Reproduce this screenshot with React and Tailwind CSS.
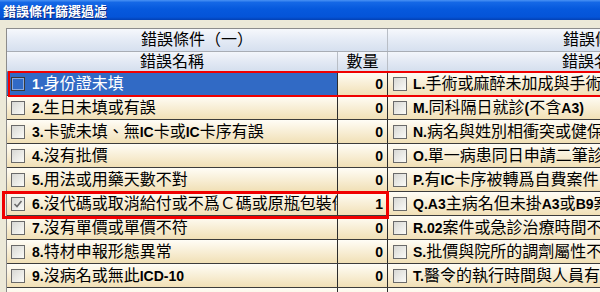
import React from 'react';

const leftRows = [
    { name: '1.身份證未填', count: 0, selected: true },
    { name: '2.生日未填或有誤', count: 0 },
    { name: '3.卡號未填、無IC卡或IC卡序有誤', count: 0 },
    { name: '4.沒有批價', count: 0 },
    { name: '5.用法或用藥天數不對', count: 0 },
    { name: '6.沒代碼或取消給付或不爲Ｃ碼或原瓶包裝件', count: 1, checked: true },
    { name: '7.沒有單價或單價不符', count: 0 },
    { name: '8.特材申報形態異常', count: 0 },
    { name: '9.沒病名或無此ICD-10', count: 0 },
    { name: '', count: null, empty: true },
];

const rightRows = [
    'L.手術或麻醉未加成與手術日期不符',
    'M.同科隔日就診(不含A3)',
    'N.病名與姓別相衝突或健保卡性別不符',
    'O.單一病患同日申請二筆診察費',
    'P.有IC卡序被轉爲自費案件',
    'Q.A3主病名但未掛A3或B9案件',
    'R.02案件或急診治療時間不符',
    'S.批價與院所的調劑屬性不符',
    'T.醫令的執行時間與人員有誤',
    '',
];

// ascii parts are drawn bold, like the old fallback font
const Label = ({ text }) =>
    text.split(/([\x21-\x7E]+)/).map((part, i) =>
        /[\x21-\x7E]/.test(part) ? (
            <b key={i} className="font-bold text-[14px]">{part}</b>
        ) : (
            <span key={i}>{part}</span>
        )
    );

const Check = ({ selected, checked }) => (
    <span
        className={`shrink-0 w-[14px] h-[14px] border flex items-center justify-center ${
            selected
                ? 'border-[#3a3a3a] bg-[#316ac5] shadow-[inset_0_0_0_1px_#8aa8dc]'
                : 'border-[#6a6a6a] bg-gradient-to-br from-[#d8d8d4] to-[#fbfbf8]'
        }`}
    >
        {checked && (
            <svg width="10" height="10" viewBox="0 0 10 10">
                <polyline points="1.5,5 4,7.5 8.5,2" fill="none" stroke="#6b6b6b" strokeWidth="1.6" />
            </svg>
        )}
    </span>
);

const cream = 'bg-gradient-to-b from-[#fffdf6] to-[#f1e0b6]';

export default function App() {
    return (
        <div className="w-[600px] h-[292px] overflow-hidden relative bg-[#ece9d8] flex flex-col font-['Liberation_Sans','Noto_Sans_CJK_TC',sans-serif] text-black">
            <div className="h-[20px] shrink-0 flex items-center pl-[3px] bg-[linear-gradient(180deg,#4a92f4_0%,#1568e6_12%,#0659dd_45%,#0454d8_85%,#0341b4_100%)]">
                <span className="text-white font-bold text-[13px] leading-none font-['Noto_Sans_CJK_TC',sans-serif] [text-shadow:1px_1px_#0a2a80]">
                    錯誤條件篩選過濾
                </span>
            </div>

            <div className="flex-1 flex pt-[8px] min-h-0">
                <div className="w-[6px] shrink-0" />
                <div className="flex-1 border-l border-t border-[#8c8c8c] bg-white flex flex-col min-w-0">
                    {/* header group row */}
                    <div className="flex h-[23px] shrink-0 text-[16px] leading-none bg-[linear-gradient(180deg,#f6f8fc_0%,#e6ecf6_45%,#d6e0ef_100%)] border-b border-[#a8adb5]">
                        <div className="w-[381px] shrink-0 border-r border-[#b9bec6] flex items-center justify-center">
                            錯誤條件（一）
                        </div>
                        <div className="w-[462px] shrink-0 flex items-center justify-center">
                            錯誤條件（二）
                        </div>
                    </div>
                    {/* column titles */}
                    <div className="flex h-[20px] shrink-0 text-[16px] leading-none bg-[linear-gradient(180deg,#f3f6fb_0%,#e3e9f4_50%,#d5dfee_100%)] border-b border-[#8c8c8c]">
                        <div className="w-[331px] shrink-0 border-r border-[#b9bec6] flex items-center justify-center">錯誤名稱</div>
                        <div className="w-[50px] shrink-0 border-r border-[#b9bec6] flex items-center justify-center">數量</div>
                        <div className="w-[413px] shrink-0 border-r border-[#b9bec6] flex items-center justify-center">錯誤名稱</div>
                        <div className="w-[49px] shrink-0 flex items-center justify-center">數量</div>
                    </div>

                    {leftRows.map((row, i) => (
                        <div key={i} className="flex h-[24px] shrink-0 border-b border-[#3c3c3c] text-[16px] leading-none">
                            <div
                                className={`w-[331px] shrink-0 border-r border-[#2c2c2c] flex items-center pl-[4px] gap-[7px] overflow-hidden whitespace-nowrap ${
                                    row.selected ? 'bg-[#316ac5] text-white' : cream
                                }`}
                            >
                                {!row.empty && <Check selected={row.selected} checked={row.checked} />}
                                <span><Label text={row.name} /></span>
                            </div>
                            <div className={`w-[50px] shrink-0 border-r border-[#2c2c2c] flex items-center justify-end pr-[4px] font-bold text-[14px] ${cream}`}>
                                {row.count}
                            </div>
                            <div className={`w-[413px] shrink-0 border-r border-[#2c2c2c] flex items-center pl-[5px] gap-[6px] overflow-hidden whitespace-nowrap ${cream}`}>
                                {rightRows[i] && <Check />}
                                <span><Label text={rightRows[i]} /></span>
                            </div>
                            <div className={`w-[49px] shrink-0 flex items-center justify-end pr-[4px] font-bold text-[14px] ${cream}`}>
                                {rightRows[i] ? 0 : ''}
                            </div>
                        </div>
                    ))}
                </div>
            </div>

            {/* red marks drawn over the grid */}
            <div className="absolute left-[8px] top-[71px] w-[700px] h-[26px] border-2 border-[#f00000] pointer-events-none" />
            <div className="absolute left-[2px] top-[191px] w-[387px] h-[28px] border-[3px] border-[#f00000] pointer-events-none" />
        </div>
    );
}
